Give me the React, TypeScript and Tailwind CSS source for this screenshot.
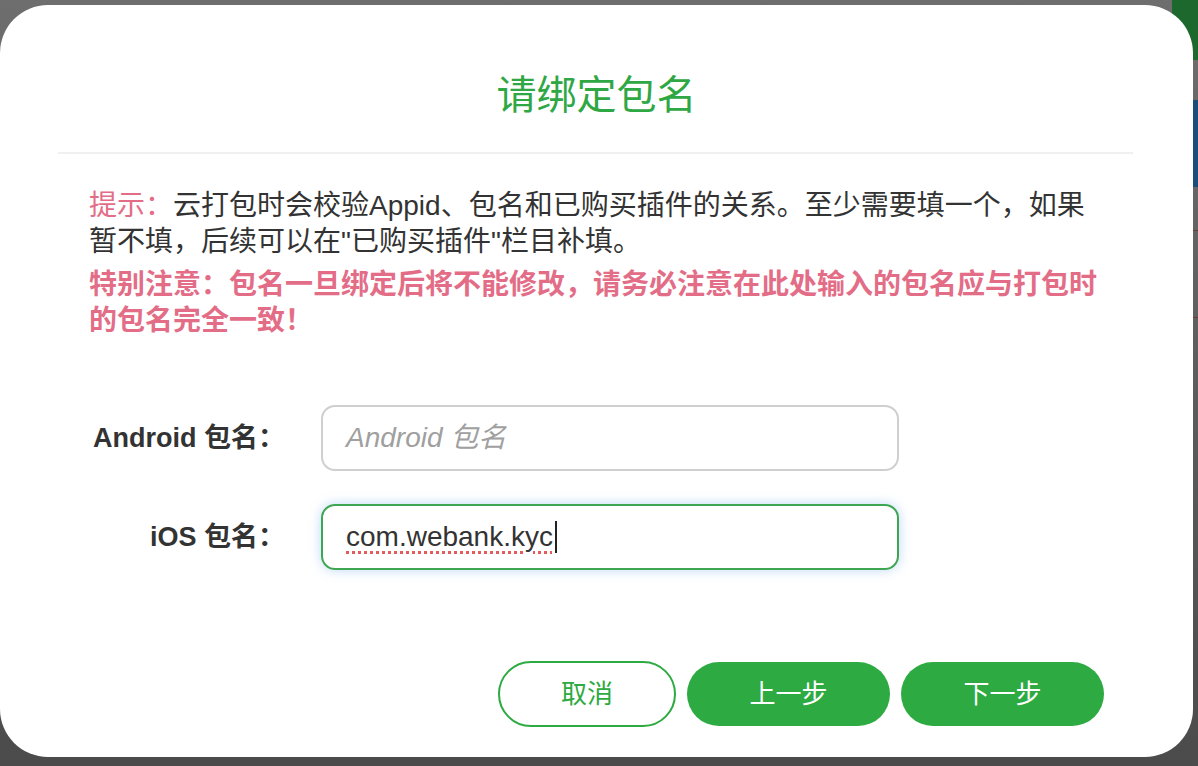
import { useState } from "react";

// 绑定包名弹窗
export default function App() {
  const [ios] = useState<string>("com.webank.kyc");

  return (
    <div
      className="relative w-[1198px] h-[766px] overflow-hidden bg-gradient-to-b from-[#6e6e6e] to-[#4b4b4b]"
      style={{ fontFamily: '"Liberation Sans", "Noto Sans CJK SC", sans-serif' }}
    >
      {/* page behind the overlay */}
      <div className="absolute right-0 top-0 w-[26px] h-[60px] bg-[#1d682c]" />
      <div className="absolute right-0 top-[100px] w-[6px] h-[87px] bg-[#1b4d76]" />
      <div className="absolute right-0 top-[230px] w-[6px] h-[1px] bg-[#6a3a3a]" />
      <div className="absolute right-0 top-[317px] w-[6px] h-[1px] bg-[#6a3a3a]" />

      {/* MODAL */}
      <div className="absolute left-0 top-[5px] w-[1193px] h-[752px] rounded-[48px] bg-white flex flex-col">
        <div className="pt-[66px] pb-[33px] text-center text-[40px] leading-[48px] text-[#2fa744]">
          请绑定包名
        </div>
        <div className="ml-[58px] mr-[60px] h-[2px] bg-[#f0f0f0]" />

        <div className="px-[89px] pt-[34px] flex flex-col">
          {/* TIPS */}
          <p className="w-[1012px] text-[28px] leading-[36px] text-[#333]">
            <span className="text-[#e36d87]">提示：</span>
            云打包时会校验Appid、包名和已购买插件的关系。至少需要填一个，如果暂不填，后续可以在"已购买插件"栏目补填。
          </p>
          <p className="mt-[7px] w-[1012px] text-[28px] leading-[36px] font-bold text-[#e36d87]">
            特别注意：包名一旦绑定后将不能修改，请务必注意在此处输入的包名应与打包时的包名完全一致！
          </p>

          {/* FORM */}
          <div className="mt-[66px] flex items-center">
            <div className="w-[196px] text-right text-[27px] font-bold text-[#333]">Android 包名：</div>
            <div className="ml-[36px] w-[578px] h-[66px] rounded-[14px] border-2 border-[#cfcfcf] flex items-center pl-[23px]">
              <span className="text-[28px] italic text-[#a0a0a0]">Android 包名</span>
            </div>
          </div>
          <div className="mt-[33px] flex items-center">
            <div className="w-[196px] text-right text-[27px] font-bold text-[#333]">iOS 包名：</div>
            <div className="ml-[36px] w-[578px] h-[66px] rounded-[14px] border-2 border-[#3ea653] shadow-[0_0_12px_rgba(110,170,235,0.45)] flex items-center pl-[23px]">
              <span className="text-[28px] text-[#333] underline decoration-dotted decoration-[#e35b5b] decoration-[3px] underline-offset-[5px]">
                {ios}
              </span>
              <span className="ml-[2px] w-[2px] h-[32px] bg-[#222]" />
            </div>
          </div>

          {/* BUTTONS */}
          <div className="mt-[91px] flex justify-end gap-[11px]">
            <button className="w-[178px] h-[66px] rounded-full border-2 border-[#2daa41] bg-white text-[26px] text-[#2daa41]">
              取消
            </button>
            <button className="w-[203px] h-[64px] mt-[1px] rounded-full bg-[#2daa41] text-[26px] text-white">
              上一步
            </button>
            <button className="w-[203px] h-[64px] mt-[1px] rounded-full bg-[#2daa41] text-[26px] text-white">
              下一步
            </button>
          </div>
        </div>
      </div>
    </div>
  );
}
